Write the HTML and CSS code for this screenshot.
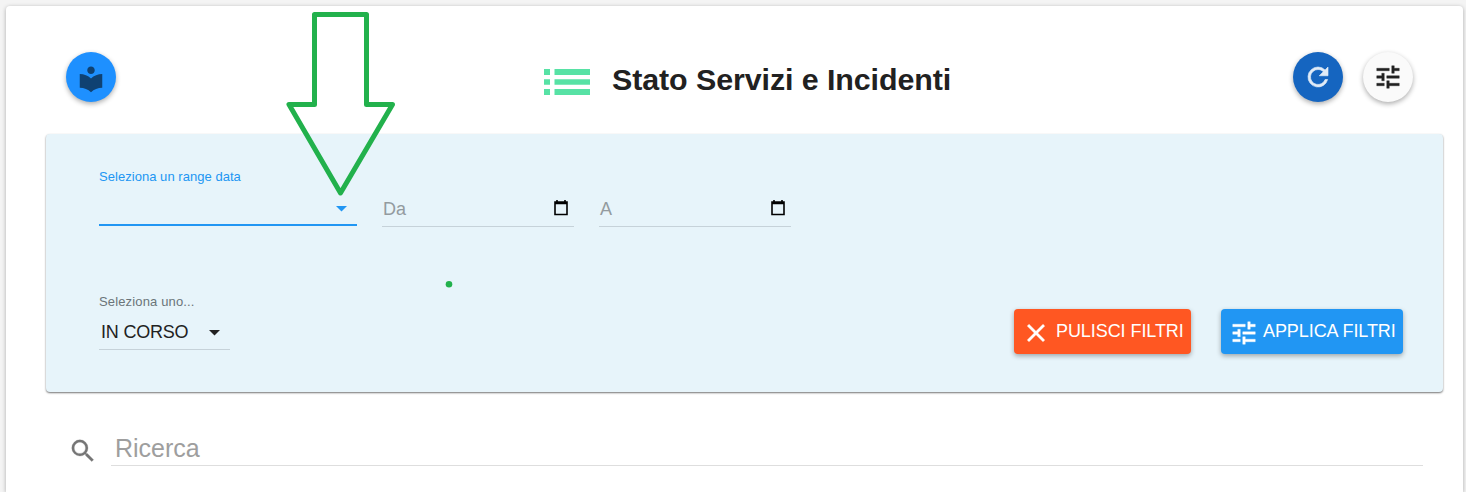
FILE: index.html
```html
<!DOCTYPE html>
<html lang="it">
<head>
<meta charset="utf-8">
<title>Stato Servizi e Incidenti</title>
<link rel="stylesheet" href="styles.css">
</head>
<body>
<main class="card">
  <header class="header">
    <button class="round round-book" aria-label="Guida">
      <svg class="icon" viewBox="0 0 24 24"><path d="M12 11.55C9.64 9.35 6.48 8 3 8v11c3.48 0 6.64 1.35 9 3.55 2.36-2.19 5.52-3.55 9-3.55V8c-3.48 0-6.64 1.35-9 3.55zM12 8c1.66 0 3-1.34 3-3s-1.34-3-3-3-3 1.34-3 3 1.34 3 3 3z"/></svg>
    </button>
    <div class="heading">
      <svg class="list-icon" viewBox="0 0 46 26"><path d="M0 0h6v6H0zM10.500 0H46v6H10.500zM0 10.200h6v5.500H0zM10.500 10.200H46v5.500H10.500zM0 20h6v6H0zM10.500 20H46v6H10.500z"/></svg>
      <h1 class="title">Stato Servizi e Incidenti</h1>
    </div>
    <div class="actions">
      <button class="round round-refresh" aria-label="Aggiorna">
        <svg class="icon" viewBox="0 0 24 24"><path d="M17.650 6.350A7.958 7.958 0 0 0 12 4a8 8 0 1 0 7.730 10h-2.080A6 6 0 1 1 12 6c1.660 0 3.140.69 4.220 1.780L13 11h7V4l-2.350 2.350z"/></svg>
      </button>
      <button class="round round-tune" aria-label="Filtri">
        <svg class="icon" viewBox="0 0 24 24"><path d="M3 17v2h6v-2H3zM3 5v2h10V5H3zm10 16v-2h8v-2h-8v-2h-2v6h2zM7 9v2H3v2h4v2h2V9H7zm14 4v-2H11v2h10zm-6-4h2V7h4V5h-4V3h-2v6z"/></svg>
      </button>
    </div>
  </header>

  <section class="panel">
    <div class="fields">
      <div class="field field-range">
        <span class="label">Seleziona un range data</span>
        <div class="control"><svg class="caret" viewBox="0 0 11 6"><path d="M0 0h11L5.500 5.500z"/></svg></div>
      </div>
      <div class="field field-date">
        <div class="control"><span>Da</span>
          <svg class="calendar" viewBox="0 0 14 16"><path d="M3 0v2M11 0v2M1 2h12v12.500H1zM1 3.500h12" /></svg>
        </div>
      </div>
      <div class="field field-date">
        <div class="control"><span>A</span>
          <svg class="calendar" viewBox="0 0 14 16"><path d="M3 0v2M11 0v2M1 2h12v12.500H1zM1 3.500h12" /></svg>
        </div>
      </div>
    </div>
    <div class="bottom">
      <div class="field field-state">
        <span class="label">Seleziona uno...</span>
        <div class="control"><span>IN CORSO</span><svg class="caret" viewBox="0 0 11 6"><path d="M0 0h11L5.500 5.500z"/></svg></div>
      </div>
      <div class="buttons">
        <button class="btn btn-clear"><svg class="btn-icon" viewBox="0 0 24 24"><path d="M19 6.410L17.590 5 12 10.590 6.410 5 5 6.410 10.590 12 5 17.590 6.410 19 12 13.410 17.590 19 19 17.590 13.410 12z"/></svg><span>PULISCI FILTRI</span></button>
        <button class="btn btn-apply"><svg class="btn-icon" viewBox="0 0 24 24"><path d="M3 17v2h6v-2H3zM3 5v2h10V5H3zm10 16v-2h8v-2h-8v-2h-2v6h2zM7 9v2H3v2h4v2h2V9H7zm14 4v-2H11v2h10zm-6-4h2V7h4V5h-4V3h-2v6z"/></svg><span>APPLICA FILTRI</span></button>
      </div>
    </div>
  </section>

  <div class="search">
    <svg class="search-icon" viewBox="0 0 24 24"><path d="M15.500 14h-.79l-.28-.27A6.471 6.471 0 0 0 16 9.500 6.500 6.500 0 1 0 9.500 16c1.610 0 3.090-.59 4.230-1.570l.27.28v.79l5 4.990L20.490 19l-4.990-5zm-6 0C7.010 14 5 11.990 5 9.500S7.010 5 9.500 5 14 7.010 14 9.500 11.990 14 9.500 14z"/></svg>
    <div class="search-input">Ricerca</div>
  </div>
</main>

<svg class="annotation" viewBox="0 0 1466 492">
  <path class="arrow" d="M314.500 14.500H366.500V104.500H392.500L340.500 193L289 104.500H314.500Z"/>
  <circle class="dot" cx="449" cy="284.300" r="3.300"/>
</svg>
</body>
</html>
```

FILE: styles.css
```css
* { box-sizing: border-box; }
body {
  margin: 0;
  padding: 6px 3px 0 6px;
  height: 492px;
  overflow: hidden;
  background: #f4f4f4;
  color: #212121;
  font-family: "Liberation Sans", Arial, sans-serif;
}
button { border: 0; padding: 0; font: inherit; }
svg { display: block; flex: none; }
.card {
  height: 486px;
  padding: 46px 20px 0 40px;
  background: #fff;
  border-radius: 4px 4px 0 0;
  box-shadow: 0 1px 4px rgba(0, 0, 0, .3);
}
.header {
  display: grid;
  grid-template-columns: 478px 1fr auto;
  align-items: start;
  height: 82px;
  padding: 0 30px 0 20px;
}
.round {
  display: flex;
  align-items: center;
  justify-content: center;
  width: 50px;
  height: 50px;
  border-radius: 50%;
  box-shadow: 0 2px 5px rgba(0, 0, 0, .32);
}
.icon { width: 30px; height: 30px; }
.round-book { background: #1e90ff; fill: #0f4172; padding-top: 3px; }
.round-refresh { background: #1565c0; fill: #e0ebf7; stroke: #e0ebf7; stroke-width: .5; }
.round-tune { background: #fafafa; fill: #212121; stroke: #212121; stroke-width: .3; }
.actions { display: flex; gap: 20px; }
.heading { display: flex; align-items: center; gap: 22px; padding-top: 9px; }
.list-icon { width: 46px; height: 26px; margin-top: 5px; fill: #57e2a5; }
.title { margin: 0; font-size: 30.4px; line-height: 36px; font-weight: 700; letter-spacing: -.08px; white-space: nowrap; }
.panel {
  height: 258px;
  padding: 35px 40px 0 53px;
  background: #e7f4fa;
  border-radius: 4px;
  box-shadow: 0 1px 2px rgba(0, 0, 0, .55);
}
.fields { display: flex; align-items: flex-end; height: 58px; }
.field { display: flex; flex-direction: column; }
.label { font-size: 13px; line-height: 16px; letter-spacing: .04px; white-space: nowrap; }
.control {
  display: flex;
  align-items: center;
  justify-content: space-between;
  border-bottom: 1px solid #c6d2d9;
  font-size: 18px;
}
.caret { width: 11px; height: 6px; fill: currentColor; }
.field-range { width: 258px; margin-bottom: 1px; color: #2196f3; }
.field-range .control { height: 41px; padding: 8px 10px 0 0; border-bottom: 2px solid #2196f3; justify-content: flex-end; }
.field-date { width: 192px; margin-left: 25px; color: #939b9f; }
.field-date .control { height: 36px; padding: 1px 6px 0 1px; }
.calendar { width: 14px; height: 16px; margin-top: -3px; fill: none; stroke: #000; stroke-width: 1.600; }
.bottom { display: flex; justify-content: space-between; height: 58px; margin-top: 66px; }
.field-state { width: 131px; }
.field-state .label { padding-top: 1px; line-height: 15px; letter-spacing: .15px; color: #6b7479; }
.field-state .control { height: 41px; padding: 7px 10px 0 2px; letter-spacing: -.2px; }
.buttons { display: flex; gap: 30px; padding-top: 16px; }
.btn {
  display: flex;
  align-items: center;
  height: 45px;
  border-radius: 4px;
  box-shadow: 0 2px 5px rgba(0, 0, 0, .32);
  color: #fff;
  font-size: 18px;
  letter-spacing: -.07px;
  white-space: nowrap;
}
.btn span { padding-bottom: 1px; }
.btn-icon { width: 30px; height: 30px; margin-top: 3px; fill: currentColor; stroke: currentColor; stroke-width: .3; }
.btn-clear { width: 177px; padding-left: 7px; gap: 5px; background: #ff5722; }
.btn-apply { width: 182px; padding-left: 8px; gap: 4px; background: #2196f3; }
.search { display: flex; height: 74px; padding: 0 20px 0 22px; align-items: flex-end; }
.search-icon { width: 30px; height: 30px; fill: #757575; stroke: #757575; stroke-width: .2; }
.search-input {
  flex: 1;
  height: 37px;
  margin-left: 13px;
  padding: 3px 4px 0;
  border-bottom: 1px solid #dedede;
  color: #9e9e9e;
  font-size: 25px;
  line-height: 32px;
}
.annotation { position: absolute; left: 0; top: 0; width: 1466px; height: 492px; pointer-events: none; }
.arrow { fill: none; stroke: #22b14c; stroke-width: 5; stroke-linejoin: round; }
.dot { fill: #22b14c; }
```
